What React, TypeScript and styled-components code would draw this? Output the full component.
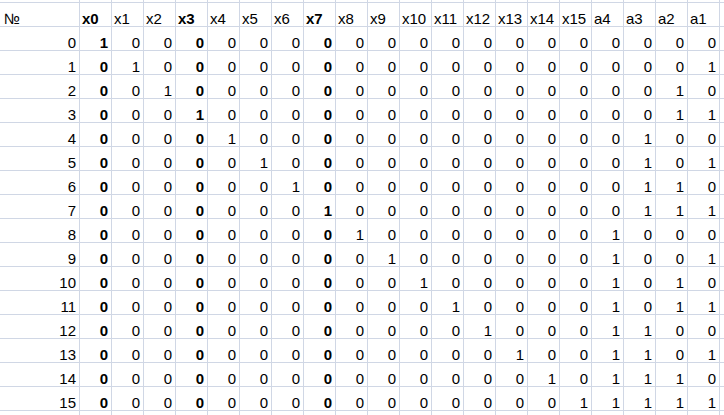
import { FC, Fragment } from 'react'
import styled, { createGlobalStyle } from 'styled-components';

const GlobalStyle = createGlobalStyle`
  html, body {
    margin: 0;
    padding: 0;
    background: #ffffff;
    overflow: hidden;
  }
`;

const Sheet = styled.div`
  display: grid;
  grid-template-columns: 80px repeat(20, 32px) 8px;
  grid-template-rows: 3px repeat(17, 24px) 8px;
  font-family: "Liberation Sans", Arial, sans-serif;
  font-size: 15px;
  color: #000;
  width: 724px;
  height: 415px;
  overflow: hidden;
`;

const Cell = styled.div<{ $align?: 'left' | 'right', $bold?: boolean }>`
  box-sizing: border-box;
  border-right: 1px solid #d0d7e5;
  border-bottom: 1px solid #d0d7e5;
  display: flex;
  align-items: flex-end;
  justify-content: ${p => p.$align === 'left' ? 'flex-start' : 'flex-end'};
  padding: 0 3px 0 2px;
  line-height: 15px;
  font-weight: ${p => p.$bold ? 'bold' : 'normal'};
  white-space: nowrap;
  overflow: hidden;
`;

const FirstCell = styled(Cell)`
  padding-left: 4px;
`;

const columns = [
  ...Array.from({ length: 16 }, (_, i) => `x${i}`),
  'a4', 'a3', 'a2', 'a1',
];
const boldCols = ['x0', 'x3', 'x7'];

const valueOf = (row: number, col: string) => {
  if (col.startsWith('x')) {
    return Number(col.slice(1)) === row ? 1 : 0;
  }
  const bit = Number(col.slice(1)) - 1;
  return (row >> bit) & 1;
};

const EmptyRow: FC = () => (
  <>
    <Cell />
    {columns.map(c => <Cell key={c} />)}
    <Cell />
  </>
);

const App = () => {
  const rows = Array.from({ length: 16 }, (_, i) => i);

  return (
    <>
      <GlobalStyle />
      <Sheet>
        <EmptyRow />

        <FirstCell $align='left'>№</FirstCell>
        {columns.map(c => (
          <Cell key={c} $align='left' $bold={boldCols.includes(c)}>{c}</Cell>
        ))}
        <Cell />

        {rows.map(r => (
          <Fragment key={r}>
            <Cell>{r}</Cell>
            {columns.map(c => (
              <Cell key={c} $bold={boldCols.includes(c)}>{valueOf(r, c)}</Cell>
            ))}
            <Cell />
          </Fragment>
        ))}

        <EmptyRow />
      </Sheet>
    </>
  );
};

export default App;
